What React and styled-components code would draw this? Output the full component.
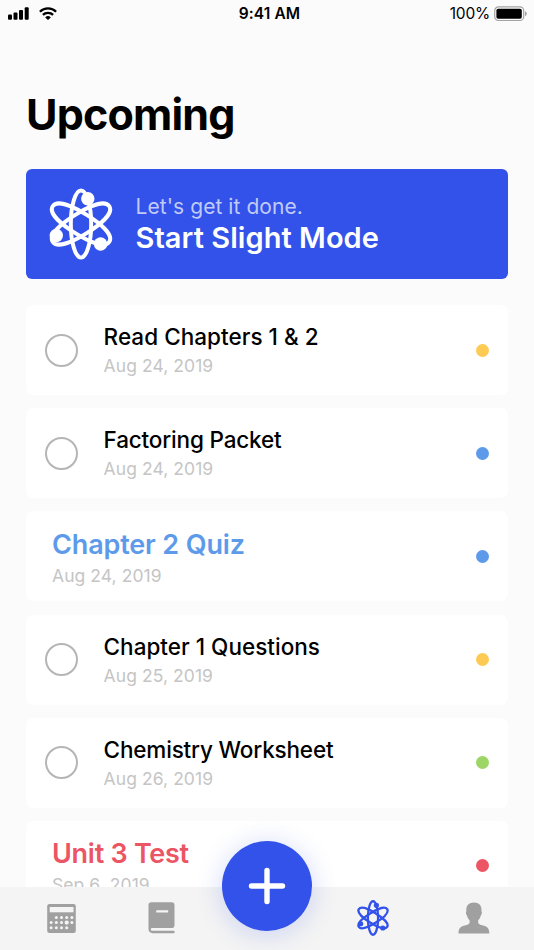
import React from "react";
import styled, { createGlobalStyle } from "styled-components";

const GlobalStyle = createGlobalStyle`
  * { box-sizing: border-box; }
  body { margin: 0; background: #fbfbfb; font-family: Inter, "Liberation Sans", sans-serif; }
`;

const Screen = styled.div`
  position: relative;
  display: flex;
  flex-direction: column;
  width: 534px;
  height: 950px;
  overflow: hidden;
  background: #fbfbfb;
  color: #000;
  white-space: nowrap;
`;

const StatusBar = styled.header`
  display: grid;
  grid-template-columns: 1fr auto 1fr;
  align-items: center;
  flex: none;
  height: 27px;
  padding: 0 6px 0 7px;
`;

const StatusGroup = styled.div`
  display: flex;
  align-items: center;
  justify-content: ${(p) => (p.$end ? "flex-end" : "flex-start")};
  gap: ${(p) => (p.$end ? 4 : 9)}px;
`;

const Clock = styled.span`
  margin-left: 4px;
  font-size: 15.5px;
  font-weight: 600;
  letter-spacing: 0.1px;
`;

const Percent = styled.span`
  font-size: 15.5px;
  letter-spacing: -0.2px;
`;

const Content = styled.main`
  display: flex;
  flex-direction: column;
  flex: 1;
  min-height: 0;
  overflow: hidden;
  padding: 0 26px;
`;

const Title = styled.h1`
  flex: none;
  margin: 61px 0 0;
  height: 81px;
  font-size: 43px;
  line-height: 52px;
  font-weight: 700;
  letter-spacing: -0.8px;
`;

const Banner = styled.section`
  display: flex;
  align-items: center;
  flex: none;
  height: 110px;
  padding-left: 19px;
  gap: 18.5px;
  border-radius: 6px;
  background: #3252ea;
  color: #fff;
`;

const BannerText = styled.div`
  display: flex;
  flex-direction: column;
  padding-top: 1px;
`;

const BannerHint = styled.span`
  font-size: 21px;
  line-height: 27px;
  color: #c1cbf8;
  letter-spacing: 0.07px;
`;

const BannerTitle = styled.span`
  font-size: 29px;
  line-height: 36px;
  font-weight: 600;
  letter-spacing: 0.05px;
`;

const TaskList = styled.ul`
  display: flex;
  flex-direction: column;
  gap: 13.2px;
  margin: 26px 0 0;
  padding: 0;
  list-style: none;
`;

const TaskCard = styled.li`
  display: flex;
  align-items: center;
  flex: none;
  height: 90px;
  padding: 0 19.5px 0 ${(p) => (p.$exam ? 26 : 19)}px;
  border-radius: 7px;
  background: #fff;
`;

const Check = styled.span`
  width: 33px;
  height: 33px;
  margin-right: 25.6px;
  border: 2px solid #b5b5b5;
  border-radius: 50%;
`;

const TaskText = styled.div`
  display: flex;
  flex-direction: column;
  flex: 1;
  padding-top: ${(p) => (p.$exam ? 5 : 2)}px;
`;

const TaskTitle = styled.span`
  font-size: ${(p) => (p.$exam ? 27 : 22.5)}px;
  line-height: ${(p) => (p.$exam ? 34 : 30)}px;
  font-weight: ${(p) => (p.$exam ? 600 : 500)};
  letter-spacing: ${(p) => p.$track || 0}px;
  color: ${(p) => p.$color || "#000"};
`;

const TaskDate = styled.span`
  font-size: 17.5px;
  line-height: 28px;
  letter-spacing: 0.07px;
  color: #c5c5c5;
`;

const SubjectDot = styled.span`
  width: 13px;
  height: 13px;
  border-radius: 50%;
  background: ${(p) => p.$color};
`;

const TabBar = styled.nav`
  display: grid;
  grid-template-columns: 102px 100px 1fr 102px 100px;
  align-items: center;
  justify-items: center;
  flex: none;
  height: 63.4px;
  padding: 0 10px;
  background: #f4f4f4;
`;

const AddButton = styled.button`
  position: absolute;
  left: 221.9px;
  top: 841.4px;
  display: grid;
  place-items: center;
  width: 90px;
  height: 90px;
  padding: 0;
  border: 0;
  border-radius: 50%;
  background: #3252ea;
  box-shadow: 0 3px 26px rgba(50, 82, 234, 0.22);
`;

const TASKS = [
  { title: "Read Chapters 1 & 2", date: "Aug 24, 2019", color: "#fdca53", track: 0.03 },
  { title: "Factoring Packet", date: "Aug 24, 2019", color: "#5d9bea", track: -0.18 },
  { title: "Chapter 2 Quiz", date: "Aug 24, 2019", color: "#5d9bea", track: -0.15, exam: true },
  { title: "Chapter 1 Questions", date: "Aug 25, 2019", color: "#fdca53", track: 0.01 },
  { title: "Chemistry Worksheet", date: "Aug 26, 2019", color: "#9dd566", track: -0.17 },
  { title: "Unit 3 Test", date: "Sep 6, 2019", color: "#ec5564", track: -0.27, exam: true },
];

const ORBIT = "M0-33.4C8.2-33.4 10.8-16 10.8 0S8.2 33.4 0 33.4-10.8 16-10.8 0-8.2-33.4 0-33.4z";

function Atom({ width, color, stroke, dot }) {
  return (
    <svg width={width} height={width} viewBox="-36 -36 72 72" fill="none" stroke={color} strokeWidth={stroke}>
      <ellipse rx="10.2" ry="33.5" />
      <path d={ORBIT} transform="rotate(58)" />
      <path d={ORBIT} transform="rotate(-58)" />
      <g fill={color} stroke="none">
        <circle cx="6.8" cy="-25.3" r={dot} />
        <circle cx="-24.7" cy="11.5" r={dot} />
        <circle cx="19.6" cy="20" r={dot} />
      </g>
    </svg>
  );
}

function Signal() {
  return (
    <svg width="23" height="14" viewBox="0 0 23 14">
      <rect x="1" y="7.5" width="4" height="5.3" rx="1" />
      <rect x="6.5" y="5.5" width="4" height="7.3" rx="1" />
      <rect x="12" y="3" width="4" height="9.8" rx="1" />
      <rect x="17.7" y="0.2" width="4" height="12.6" rx="1" />
    </svg>
  );
}

function Wifi() {
  return (
    <svg width="18" height="14" viewBox="0 0 18 14" fill="none" stroke="#000" strokeWidth="2.3">
      <path d="M0.9 4.7a11.5 11.5 0 0 1 16.2 0" />
      <path d="M3.9 7.9a7.2 7.2 0 0 1 10.2 0" />
      <path d="M9 13 6.2 10.4a4 4 0 0 1 5.6 0z" fill="#000" stroke="none" />
    </svg>
  );
}

function Battery() {
  return (
    <svg width="34" height="16" viewBox="0 0 34 16">
      <rect x="0.7" y="0.9" width="29" height="13.6" rx="3.8" fill="none" stroke="#a3a3a3" strokeWidth="1.2" />
      <rect x="2.4" y="2.7" width="25.4" height="10" rx="1.8" />
      <path d="M31 5.3c2.4.8 2.4 4 0 4.8z" fill="#a3a3a3" />
    </svg>
  );
}

const KEYS = [
  [1, 0], [2, 0], [3, 0], [4, 0],
  [0, 1], [1, 1], [2, 1], [3, 1], [4, 1],
  [0, 2], [1, 2], [2, 2], [3, 2],
];

function Calendar() {
  return (
    <svg width="29" height="29" viewBox="0 0 29 29">
      <rect x="0.2" y="0" width="28.6" height="29" rx="2.2" fill="#a0a0a0" />
      <rect x="2.7" y="3" width="23.8" height="5.3" fill="#f4f4f4" />
      {KEYS.map(([c, r]) => (
        <circle key={`${c}-${r}`} cx={4.1 + c * 5.2} cy={13.4 + r * 5.2} r={c === 3 && r === 1 ? 2.1 : 1.5} fill="#f4f4f4" />
      ))}
    </svg>
  );
}

function Book() {
  return (
    <svg width="28" height="32" viewBox="0 0 28 32">
      <path d="M3.3.3h20.4a2.8 2.8 0 0 1 2.8 2.8v20.1a2.8 2.8 0 0 1-2.8 2.8H3.7c-1.2 0-1.2 2.8 0 2.8h21.8a1.2 1.2 0 0 1 0 2.4H4.7A4.4 4.4 0 0 1 .5 27V3.1A2.8 2.8 0 0 1 3.3.3z" fill="#a0a0a0" />
      <rect x="8.2" y="8.3" width="12" height="2.2" rx="0.5" fill="#f4f4f4" />
    </svg>
  );
}

function Person() {
  return (
    <svg width="32" height="32" viewBox="0 0 32 32" fill="#a0a0a0">
      <path d="M16 .5c5 0 7.5 2.9 7.5 7.3v1.7c.7.4.4 3.4-.6 3.8-.5 2.3-1.5 3.7-2.7 5v2.2c.2 2.1 3.3 2.5 6 3.3 3.5 1 5.1 3.3 5.1 7.7H.5c0-4.4 1.6-6.7 5.1-7.7 2.7-.8 5.8-1.2 6-3.3v-2.2c-1.2-1.3-2.2-2.7-2.7-5-1-.4-1.3-3.4-.6-3.8V7.8C8.3 3.4 11 .5 16 .5z" />
    </svg>
  );
}

export default function App() {
  return (
    <Screen>
      <GlobalStyle />
      <StatusBar>
        <StatusGroup>
          <Signal />
          <Wifi />
        </StatusGroup>
        <Clock>9:41 AM</Clock>
        <StatusGroup $end>
          <Percent>100%</Percent>
          <Battery />
        </StatusGroup>
      </StatusBar>
      <Content>
        <Title>Upcoming</Title>
        <Banner>
          <Atom width={72} color="#fff" stroke={4} dot={6.7} />
          <BannerText>
            <BannerHint>Let's get it done.</BannerHint>
            <BannerTitle>Start Slight Mode</BannerTitle>
          </BannerText>
        </Banner>
        <TaskList>
          {TASKS.map((t) => (
            <TaskCard key={t.title} $exam={t.exam}>
              {!t.exam && <Check />}
              <TaskText $exam={t.exam}>
                <TaskTitle $exam={t.exam} $track={t.track} $color={t.exam && t.color}>{t.title}</TaskTitle>
                <TaskDate>{t.date}</TaskDate>
              </TaskText>
              <SubjectDot $color={t.color} />
            </TaskCard>
          ))}
        </TaskList>
      </Content>
      <TabBar>
        <Calendar />
        <Book />
        <span />
        <Atom width={36} color="#3252ea" stroke={4.6} dot={5.2} />
        <Person />
      </TabBar>
      <AddButton aria-label="Add">
        <svg width="38" height="38" viewBox="0 0 38 38" stroke="#fff" strokeWidth="5.4" strokeLinecap="round">
          <path d="M19 3.5v31M3.5 19h31" />
        </svg>
      </AddButton>
    </Screen>
  );
}
